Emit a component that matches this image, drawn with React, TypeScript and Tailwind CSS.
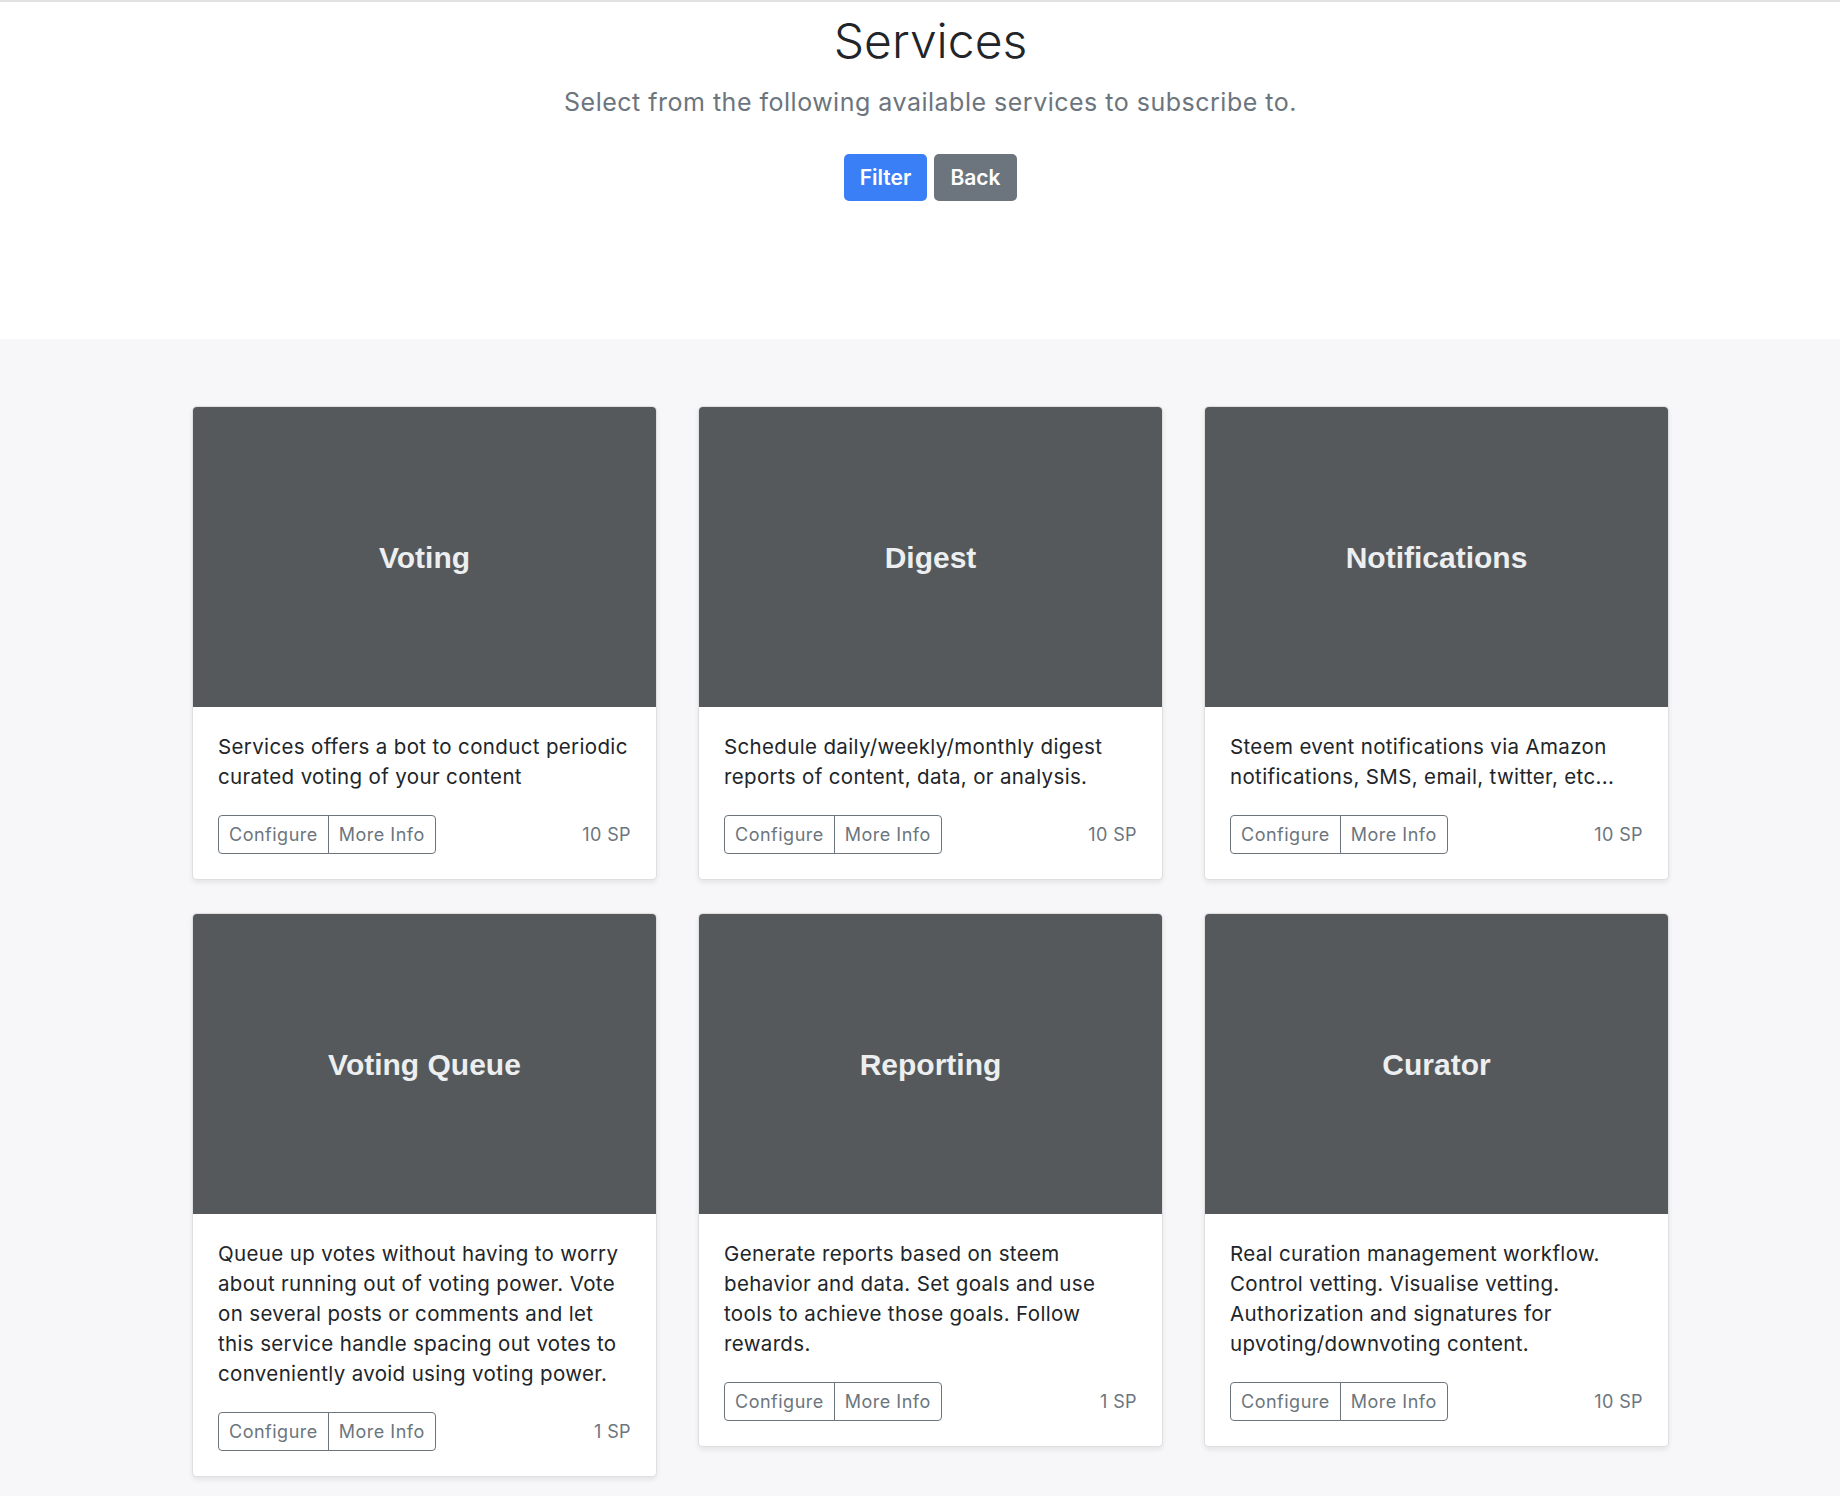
import React from 'react';

interface Service {
  title: string;
  description: string;
  price: string;
}

const services: Service[] = [
  {
    title: 'Voting',
    description: 'Services offers a bot to conduct periodic curated voting of your content',
    price: '10 SP',
  },
  {
    title: 'Digest',
    description: 'Schedule daily/weekly/monthly digest reports of content, data, or analysis.',
    price: '10 SP',
  },
  {
    title: 'Notifications',
    description: 'Steem event notifications via Amazon notifications, SMS, email, twitter, etc...',
    price: '10 SP',
  },
  {
    title: 'Voting Queue',
    description:
      'Queue up votes without having to worry about running out of voting power. Vote on several posts or comments and let this service handle spacing out votes to conveniently avoid using voting power.',
    price: '1 SP',
  },
  {
    title: 'Reporting',
    description:
      'Generate reports based on steem behavior and data. Set goals and use tools to achieve those goals. Follow rewards.',
    price: '1 SP',
  },
  {
    title: 'Curator',
    description:
      'Real curation management workflow. Control vetting. Visualise vetting. Authorization and signatures for upvoting/downvoting content.',
    price: '10 SP',
  },
];

const ServiceCard: React.FC<{ service: Service }> = ({ service }) => {
  return (
    <div className="bg-white border border-black/[0.125] rounded-[5px] shadow-[0_2.5px_5px_rgba(0,0,0,0.075)] overflow-hidden self-start">
      {/* Placeholder thumbnail */}
      <div className="h-[300px] bg-[#55595c] flex items-center justify-center">
        <span className="font-['Liberation_Sans',Arial,sans-serif] font-bold text-[30px] text-[#eceeef]">
          {service.title}
        </span>
      </div>
      <div className="p-[25px]">
        <p className="text-[20.5px] tracking-[0.35px] leading-[30px] text-[#212529] mb-[23px]">
          {service.description}
        </p>
        <div className="flex items-center justify-between">
          <div className="flex">
            <button className="h-[39px] px-[10px] text-[18px] tracking-[0.5px] text-[#6c757d] border border-[#6c757d] rounded-l-[4px]">
              Configure
            </button>
            <button className="h-[39px] px-[10px] text-[18px] tracking-[0.5px] text-[#6c757d] border border-[#6c757d] -ml-px rounded-r-[4px]">
              More Info
            </button>
          </div>
          <small className="text-[18px] tracking-[0.4px] text-[#6c757d]">{service.price}</small>
        </div>
      </div>
    </div>
  );
};

export default function App() {
  return (
    <div className="min-h-[1496px] bg-[#f7f7f9] font-['Inter','Noto_Sans',sans-serif] overflow-hidden">
      {/* Header */}
      <section className="bg-white border-t-2 border-[#e2e2e2] h-[339px] pl-[21px] flex flex-col items-center">
        <h1 className="text-[48px] font-light text-[#212529] leading-[60px] mt-[9px]">Services</h1>
        <p className="text-[25px] tracking-[0.5px] text-[#6c757d] leading-[37px] mt-[13px]">
          Select from the following available services to subscribe to.
        </p>
        <div className="flex gap-[7px] mt-[33px]">
          <button className="w-[83px] h-[47px] bg-[#3a7ff6] text-white text-[21px] font-semibold rounded-[5px]">
            Filter
          </button>
          <button className="w-[83px] h-[47px] bg-[#6c757d] text-white text-[21px] font-semibold rounded-[5px]">
            Back
          </button>
        </div>
      </section>

      {/* Album */}
      <main className="pt-[67px] pb-[17px]">
        <div className="w-[1477px] ml-[192px] grid grid-cols-3 gap-x-[41px] gap-y-[33px]">
          {services.map((service) => (
            <ServiceCard key={service.title} service={service} />
          ))}
        </div>
      </main>
    </div>
  );
}
